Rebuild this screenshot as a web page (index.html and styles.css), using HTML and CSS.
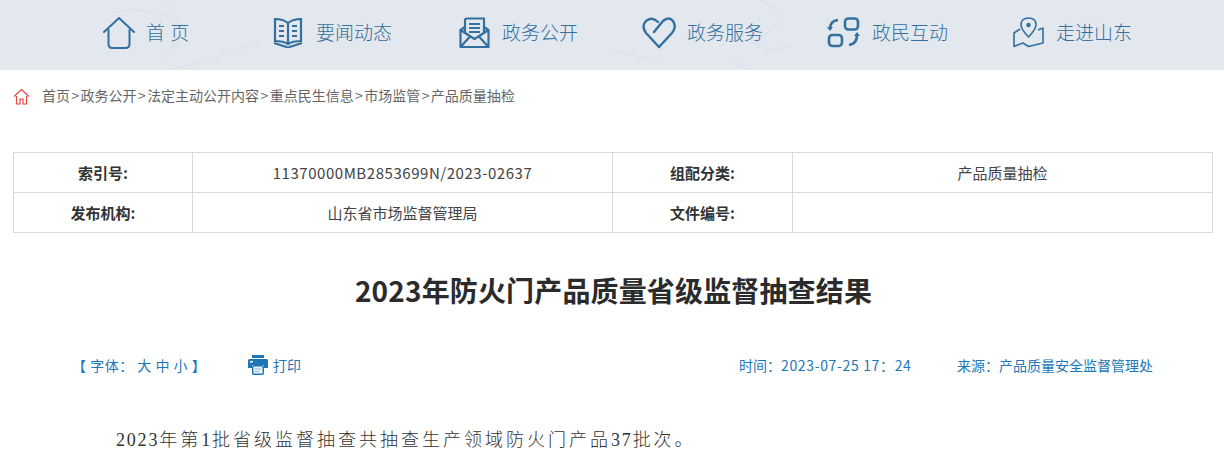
FILE: index.html
```html
<!DOCTYPE html>
<html lang="zh-CN">
<head>
  <meta charset="UTF-8" />
  <title>2023年防火门产品质量省级监督抽查结果</title>
  <link rel="stylesheet" href="styles.css">
</head>
<body>
  <div id="nav">
    <svg class="nav-map" width="1224" height="70" viewBox="0 0 1224 70" fill="none" stroke="#dbe1e9" stroke-width="1.200">
      <path d="M112 12 Q150 5 178 22 Q185 40 160 58 M165 0 Q180 20 183 30 M172 70 Q205 60 235 52 Q250 42 262 40" />
      <path d="M760 0 Q780 10 783 20 Q770 30 755 45 M752 25 L752 42 Q770 55 790 45" />
      <path d="M612 50 Q640 58 660 60 M735 62 Q745 70 750 70" />
    </svg>
    <a class="nav-item w-home" href="#">
      <svg width="32" height="32" viewBox="0 0 32 32" fill="none" stroke="#336f9f" stroke-width="2" stroke-linecap="round" stroke-linejoin="round">
        <path d="M1 15 L16 1 L31 15" />
        <path d="M5.500 13 V27 Q5.500 31 9.500 31 H22.500 Q26.500 31 26.500 27 V13" />
      </svg>
      <span class="nav-label spaced">首 页</span>
    </a>
    <a class="nav-item w-news" href="#">
      <svg width="30" height="31" viewBox="0 0 30 31" fill="none" stroke="#336f9f" stroke-width="2.200">
        <path d="M2 2 Q10 2 15 6 Q20 2 28 2 V24 Q20 24 15 27 Q10 24 2 24 Z" />
        <path d="M15 6 V27 M6 9 H11 M6 14 H11 M6 19 H11 M19 9 H24 M19 14 H24 M19 19 H24" />
        <path d="M1 26 L15 30.500 L29 26" />
      </svg>
      <span class="nav-label">要闻动态</span>
    </a>
    <a class="nav-item w-open" href="#">
      <svg width="31" height="32" viewBox="0 0 31 32" fill="none" stroke="#336f9f" stroke-width="2.200" stroke-linejoin="round">
        <path d="M1.500 13 V30 H29.500 V13 L25 10" />
        <path d="M6 10 L1.500 13 L15.500 22 L29.500 13" />
        <path d="M6 16 V3 Q6 1.500 8 1.500 H25 V16" />
        <path d="M10 7 H21 M10 11 H21 M10 15 H21" />
        <path d="M1.500 30 L11 19.500 M29.500 30 L20 19.500" />
      </svg>
      <span class="nav-label">政务公开</span>
    </a>
    <a class="nav-item w-serv" href="#">
      <svg width="34" height="32" viewBox="0 0 34 32" fill="none" stroke="#336f9f" stroke-width="2.400" stroke-linecap="round" stroke-linejoin="round">
        <path d="M17 30 L4 16 Q-1 9 4 4 Q10 -1 16 5" />
        <path d="M12 15 L21 4 Q27 -1 31 4 Q35 10 30 16 L17 30" />
      </svg>
      <span class="nav-label">政务服务</span>
    </a>
    <a class="nav-item w-inter" href="#">
      <svg width="33" height="31" viewBox="0 0 33 31" fill="none" stroke="#336f9f" stroke-width="2.600" stroke-linejoin="round">
        <rect x="18" y="1.500" width="13" height="11" rx="3.500" />
        <rect x="2" y="18" width="13" height="11" rx="3.500" />
        <path d="M11 3 Q3 4 3 12" />
        <path d="M22 28 Q30 27 30 18" />
        <path d="M0 10 H6 L3 14 Z M27 19 H33 L30 15 Z" fill="#336f9f" stroke="none" />
      </svg>
      <span class="nav-label">政民互动</span>
    </a>
    <a class="nav-item" href="#">
      <svg width="31" height="31" viewBox="0 0 31 31" fill="none" stroke="#336f9f" stroke-width="1.600" stroke-linejoin="round">
        <path d="M15.500 20 Q8 12 8 8 Q8 1 15.500 1 Q23 1 23 8 Q23 12 15.500 20 Z" />
        <circle cx="15.500" cy="8" r="2.200" fill="#336f9f" stroke="none" />
        <path d="M7 12 L1 16 V29.500 L10 26 L15.500 29.500 L30 26 V11 L25 13" />
      </svg>
      <span class="nav-label">走进山东</span>
    </a>
  </div>

  <div id="crumb">
    <svg width="17" height="17" viewBox="0 0 17 17" fill="none" stroke="#e4473f" stroke-width="1.200">
      <path d="M1 8.500 L8.500 1.500 L16 8.500" />
      <path d="M3.500 8 V16 H7 V11 H10 V16 H13.500 V8" />
    </svg>
    <span>首页<i class="sep">&gt;</i>政务公开<i class="sep">&gt;</i>法定主动公开内容<i class="sep">&gt;</i>重点民生信息<i class="sep">&gt;</i>市场监管<i class="sep">&gt;</i>产品质量抽检</span>
  </div>

  <div id="meta-table">
    <div class="cell head">索引号:</div>
    <div class="cell code">11370000MB2853699N/2023-02637</div>
    <div class="cell head">组配分类:</div>
    <div class="cell">产品质量抽检</div>
    <div class="cell head">发布机构:</div>
    <div class="cell">山东省市场监督管理局</div>
    <div class="cell head">文件编号:</div>
    <div class="cell"></div>
  </div>

  <h1>2023年防火门产品质量省级监督抽查结果</h1>

  <div id="tools">
    <div class="font-size">【 字体： 大 中 小 】</div>
    <div class="print">
      <svg width="20" height="20" viewBox="0 0 20 20">
        <path d="M4 0 H16 V3 H4 Z" fill="#1d76b8" />
        <path d="M1.500 4 H18.500 Q20 4 20 5.500 V13 H16 V10 H4 V13 H0 V5.500 Q0 4 1.500 4 Z" fill="#1d76b8" />
        <rect x="2" y="6" width="3" height="1.500" fill="#fff" />
        <rect x="4.700" y="10.700" width="10.600" height="8.600" rx="1" fill="#e8f1f8" stroke="#1d76b8" stroke-width="1.400" />
        <path d="M7 14 H13 M7 16.500 H11" stroke="#8db8d8" stroke-width="1" />
      </svg>
      <span>打印</span>
    </div>
    <div class="info-time">时间：<span class="stamp">2023-07-25 17：24</span></div>
    <div class="info-source">来源：产品质量安全监督管理处</div>
  </div>

  <p class="article"><span class="num">2023</span>年第<span class="num">1</span>批省级监督抽查共抽查生产领域防火门产品<span class="num">37</span>批次。</p>
</body>
</html>
```

FILE: styles.css
```css
html, body {
  height: 455px;
  overflow: hidden;
}

body {
  margin: 0;
  background: #fff;
  font-family: "Noto Sans CJK SC", "Liberation Sans", sans-serif;
  font-size: 14px;
  color: #333;
}

#nav {
  position: relative;
  display: flex;
  align-items: center;
  box-sizing: border-box;
  height: 70px;
  padding: 0 0 5px 103px;
  background: #e3e8ee;
  overflow: hidden;
}

.nav-map {
  position: absolute;
  top: 0;
  left: 0;
}

.nav-item {
  position: relative;
  display: flex;
  align-items: center;
  gap: 12px;
  color: #336f9f;
  text-decoration: none;
}

.w-home { width: 170px; gap: 11px; }
.w-news { width: 186px; gap: 13px; }
.w-open { width: 183px; }
.w-serv { width: 185px; gap: 11px; }
.w-inter { width: 186px; }

.nav-label {
  padding-bottom: 3px;
  font-size: 19px;
  font-weight: 300;
}

.spaced {
  word-spacing: 1px;
}

#crumb {
  display: flex;
  align-items: center;
  gap: 12px;
  height: 52px;
  padding-left: 13px;
  color: #666;
}

#crumb span {
  position: relative;
  top: -1px;
}

.sep {
  margin: 0 1.400px;
  font-style: normal;
}

#meta-table {
  display: grid;
  grid-template-columns: 179px 420px 180px 1fr;
  grid-auto-rows: 40px;
  width: 1200px;
  margin: 30px 0 0 13px;
  box-sizing: border-box;
  border-top: 1px solid #d9d9d9;
  border-left: 1px solid #d9d9d9;
  font-size: 15px;
}

.cell {
  display: flex;
  align-items: center;
  justify-content: center;
  border-right: 1px solid #d9d9d9;
  border-bottom: 1px solid #d9d9d9;
  color: #444;
}

.code {
  letter-spacing: 0.550px;
}

.head {
  font-weight: bold;
  color: #333;
}

h1 {
  margin: 36px 0 0;
  padding-left: 3px;
  font-size: 28px;
  line-height: 42px;
  letter-spacing: 0.150px;
  font-weight: bold;
  text-align: center;
  color: #2b2b2b;
}

#tools {
  display: flex;
  align-items: center;
  height: 24px;
  margin-top: 42px;
  padding-left: 72px;
  color: #1d76b8;
}

.font-size {
  width: 176px;
  white-space: nowrap;
  letter-spacing: 0.500px;
}

.print {
  display: flex;
  align-items: center;
  gap: 5px;
  width: 491px;
}

.info-time {
  width: 218px;
  white-space: nowrap;
}

.stamp {
  letter-spacing: 0.650px;
}

.article {
  margin: 48px 0 0 116px;
  font-family: "Liberation Serif", "Noto Sans CJK SC", serif;
  font-size: 18px;
  line-height: 30px;
  letter-spacing: 3px;
  color: #333;
  font-weight: 300;
}

.num {
  letter-spacing: 1.800px;
}
```
